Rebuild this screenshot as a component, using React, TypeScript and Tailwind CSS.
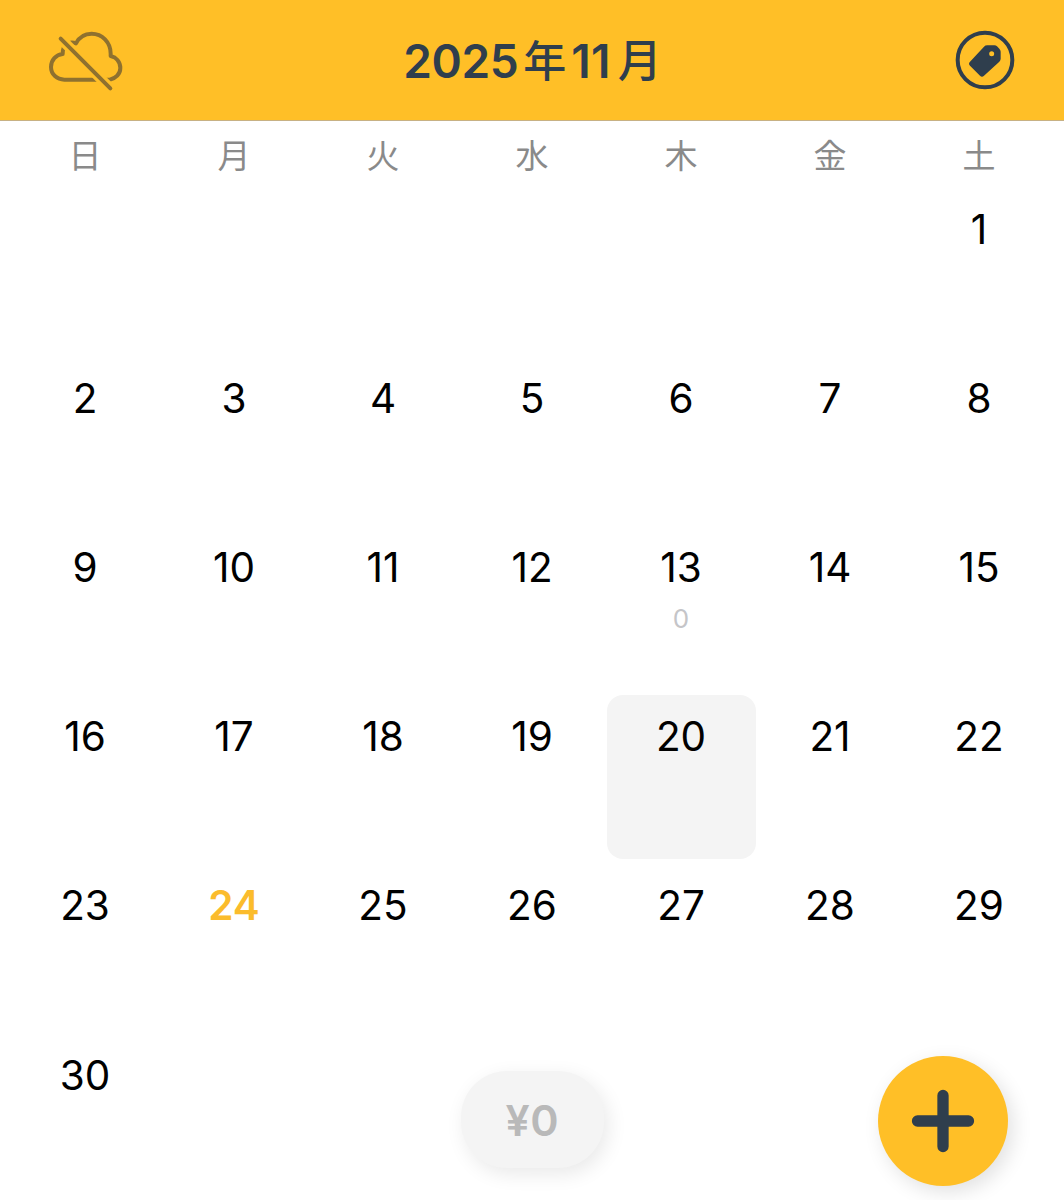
const weekdays = ['日', '月', '火', '水', '木', '金', '土'];
const leadingBlanks = 6;
const cells: (number | null)[] = [
  ...Array<null>(leadingBlanks).fill(null),
  ...Array.from({ length: 30 }, (_, i) => i + 1),
];
const today = 24;
const selected = 20;
const totals: Record<number, string> = { 13: '0' };

function CloudOffIcon() {
  return (
    <svg viewBox="50 60 232 190" className="h-[63.33px] w-[77.33px]" fill="none">
      <path
        d="M102 212H238C256 209 270 195 270 177C270 159 258 145 241 141V134C241 99 215 74 184 74C163 74 146 85 137 103C117 95 96 107 97 135C77 137 62 153 62 174C62 196 80 212 102 212Z"
        stroke="#8f712f"
        strokeWidth="12"
        strokeLinejoin="round"
      />
      <path d="M80 78L252 250" stroke="#ffbf27" strokeWidth="31" />
      <path d="M91 89L240 238" stroke="#8f712f" strokeWidth="12" strokeLinecap="round" />
    </svg>
  );
}

function TagIcon() {
  return (
    <svg viewBox="76 58 180 180" className="size-[60px]" fill="none">
      <circle cx="166" cy="148" r="82" stroke="#2f3e4d" strokeWidth="12" />
      <path
        fillRule="evenodd"
        fill="#2f3e4d"
        d="M173 104H194Q199 104 202 107L209 114Q213 118 213 123V144Q213 149 209 153L163 195Q157 201 151 195L121 165Q115 159 121 153L163 108Q167 104 173 104ZM186 122A7.5 7.5 0 1 0 186 137A7.5 7.5 0 1 0 186 122Z"
      />
    </svg>
  );
}

function Day({ day }: { day: number | null }) {
  if (day === null) return <div />;
  return (
    <div
      className={
        'mb-[5.7px] flex flex-col items-center rounded-[16px] pt-[17px] ' +
        (day === selected ? 'bg-[#f4f4f4]' : '')
      }
    >
      <span
        className={
          'text-[40.5px] leading-[50px] ' +
          (day === today ? 'font-semibold text-[#fbbc2c]' : 'text-black')
        }
      >
        {day}
      </span>
      {totals[day] && (
        <span className="mt-[10px] text-[26px] leading-[32px] text-[#c5c5c8]">{totals[day]}</span>
      )}
    </div>
  );
}

export default function App() {
  return (
    <div className="relative flex h-[1200px] w-[1064px] flex-col overflow-hidden bg-white font-['Inter','Noto_Sans_CJK_JP',sans-serif]">
      <header className="flex h-[121px] shrink-0 items-center justify-between border-b border-[#c7b184] bg-[#ffbf27] pr-[49px] pl-[47px]">
        <div className="mt-[2px] flex w-[80px]">
          <CloudOffIcon />
        </div>
        <h1 className="flex items-center pt-[1px] pl-[3px] text-[46px] leading-[60px] font-semibold text-[#2f3e4d]">
          <span className="tracking-[-0.4px]">2025</span>
          <span className="ml-[5px] text-[43px] font-medium">年</span>
          <span className="ml-[5px] tracking-[0.3px]">11</span>
          <span className="ml-[7px] text-[44px] font-medium">月</span>
        </h1>
        <div className="flex w-[80px] justify-end">
          <TagIcon />
        </div>
      </header>

      <div className="ml-[10.5px] grid h-[66.7px] w-[1043px] shrink-0 grid-cols-7 text-center text-[33px] leading-[67px] text-[#8a8a8a]">
        {weekdays.map((name) => (
          <div key={name} className="font-['Noto_Sans_CJK_JP',sans-serif] font-normal">
            {name}
          </div>
        ))}
      </div>

      <main className="ml-[10.5px] grid w-[1043px] shrink-0 auto-rows-[169.2px] grid-cols-7">
        {cells.map((day, i) => (
          <Day key={i} day={day} />
        ))}
      </main>

      <div className="absolute top-[1071px] left-[460.5px] flex h-[97px] w-[143.5px] items-center justify-center rounded-[46px] bg-[#f4f4f4] pt-[2px] text-[43px] font-semibold tracking-[0.5px] text-[#b9b9b9] shadow-[4px_6px_20px_rgba(0,0,0,0.09)]">
        ¥0
      </div>

      <button
        aria-label="追加"
        className="absolute top-[1055.7px] left-[877.6px] flex size-[130.6px] items-center justify-center rounded-full bg-[#ffbf27] shadow-[5px_6px_20px_rgba(0,0,0,0.12)]"
      >
        <svg viewBox="0 0 64 64" className="size-[64px]" fill="none">
          <path d="M32 6.5V57.5M6.5 32H57.5" stroke="#2f3e4d" strokeWidth="11.3" strokeLinecap="round" />
        </svg>
      </button>
    </div>
  );
}
